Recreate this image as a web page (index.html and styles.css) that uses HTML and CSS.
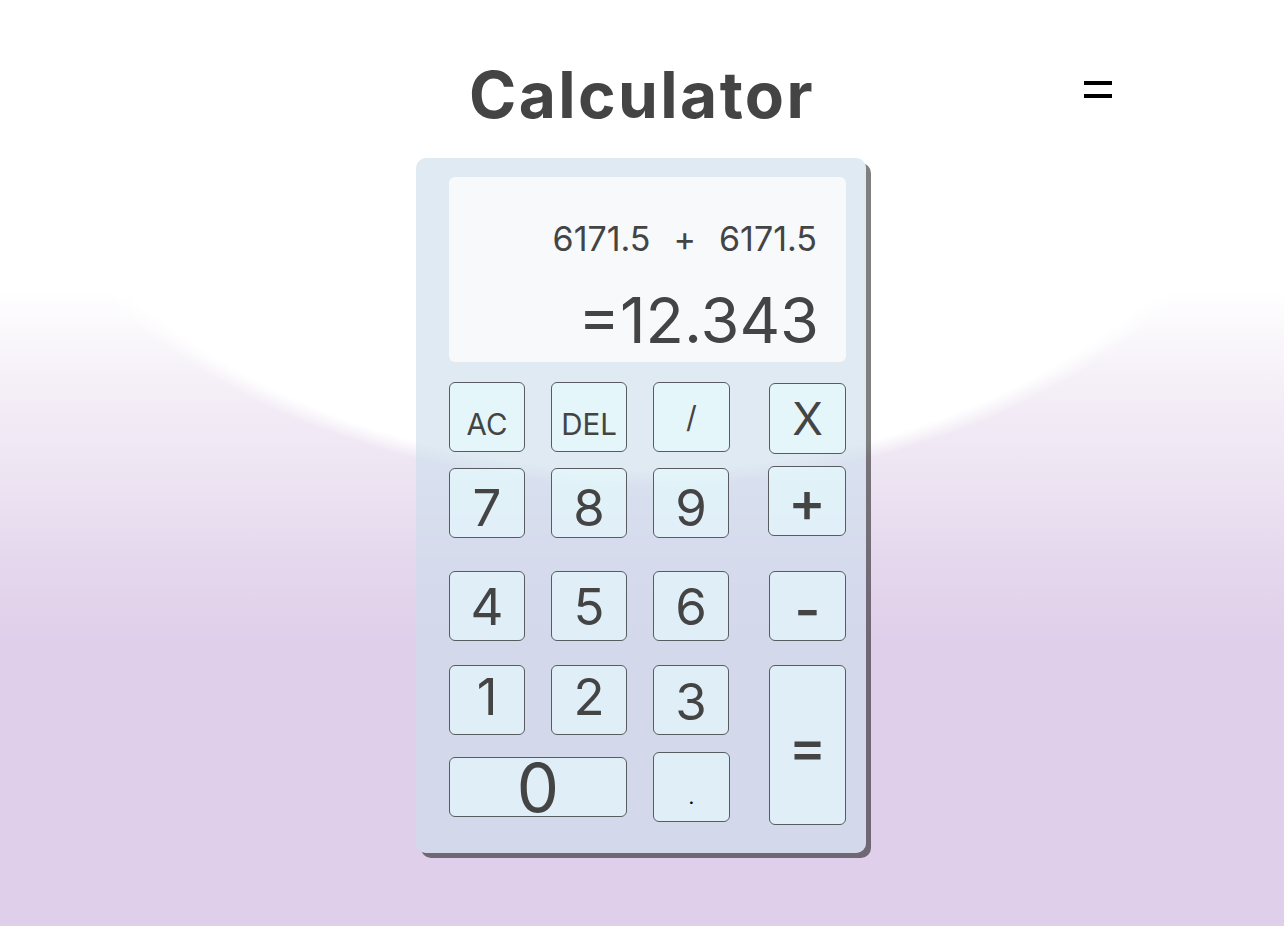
FILE: index.html
```html
<!DOCTYPE html>
<html lang="en">
<head>
<meta charset="utf-8">
<title>Calculator</title>
<link rel="stylesheet" href="styles.css">
</head>
<body>
<header class="topbar">
  <div class="topbar-side"></div>
  <h1 class="title">Calculator</h1>
  <div class="topbar-side topbar-right">
    <button class="menu" aria-label="Menu"><span class="menu-bar"></span><span class="menu-bar"></span></button>
  </div>
</header>
<main class="calc">
  <div class="display">
    <div class="expr"><span>6171.5</span><span class="expr-op">+</span><span>6171.5</span></div>
    <div class="result">=12.343</div>
  </div>
  <div class="keys">
    <button class="key key-word">AC</button>
    <button class="key key-word">DEL</button>
    <button class="key key-slash">/</button>
    <button class="key key-x">X</button>

    <button class="key key-num key-low">7</button>
    <button class="key key-num key-low">8</button>
    <button class="key key-num key-low">9</button>
    <button class="key key-op key-plus">+</button>

    <button class="key key-num">4</button>
    <button class="key key-num">5</button>
    <button class="key key-num">6</button>
    <button class="key key-op key-minus">-</button>

    <button class="key key-num key-high">1</button>
    <button class="key key-num key-high">2</button>
    <button class="key key-num key-three">3</button>
    <button class="key key-op key-equals">=</button>

    <button class="key key-zero">0</button>
    <button class="key key-dot">.</button>
  </div>
</main>
</body>
</html>
```

FILE: styles.css
```css
html, body {
  margin: 0;
  padding: 0;
}

body {
  min-height: 926px;
  font-family: "Inter", "Liberation Sans", sans-serif;
  color: #444;
  background:
    radial-gradient(ellipse 680px 487px at 50% 0, #fff 96.5%, rgba(255,255,255,0) 100%),
    linear-gradient(#fff 0, #fff 290px, #f4eef7 390px, #eee5f3 470px, #e5d8ed 560px, #e0cfea 640px, #e0cfea 100%);
  background-repeat: no-repeat;
}

.topbar {
  display: grid;
  grid-template-columns: 1fr auto 1fr;
  align-items: start;
  height: 158px;
  box-sizing: border-box;
  padding-top: 63px;
}

.title {
  margin: 0;
  font-family: "Inter", "Liberation Sans", sans-serif;
  font-weight: 700;
  font-size: 64px;
  line-height: 64px;
  letter-spacing: 2.4px;
  color: #444;
}

.topbar-right {
  display: flex;
  justify-content: flex-end;
  padding-right: 172px;
}

.menu {
  display: flex;
  flex-direction: column;
  gap: 9px;
  margin-top: 18px;
  padding: 0;
  border: 0;
  background: none;
}

.menu-bar {
  display: block;
  width: 28px;
  height: 4px;
  background: #000;
}

.calc {
  width: 450px;
  height: 695px;
  box-sizing: border-box;
  margin: 0 0 0 calc(50% - 226px);
  padding: 19px 20px 0 33px;
  border-radius: 10px;
  background: rgba(203, 221, 236, 0.62);
  box-shadow: 5px 5px 0 rgba(0, 0, 0, 0.5);
}

.display {
  height: 185px;
  box-sizing: border-box;
  padding: 42px 29px 0 0;
  border-radius: 6px;
  background: #f8f9fb;
  text-align: right;
}

.expr {
  display: flex;
  justify-content: flex-end;
  gap: 23px;
  font-size: 34px;
  line-height: 40px;
  color: #444;
}

.result {
  margin-top: 26px;
  margin-right: -2px;
  font-size: 63px;
  line-height: 70px;
  color: #444;
}

.keys {
  display: grid;
  grid-template-columns: 102px 102px 116px 77px;
  grid-template-rows: 86px 103px 94px 87px 70px;
  margin-top: 20px;
}

.key {
  width: 76px;
  height: 70px;
  padding: 0;
  box-sizing: border-box;
  border: 1px solid #585c61;
  border-radius: 6px;
  background: rgba(232, 254, 255, 0.6);
  font-family: "Inter", "Liberation Sans", sans-serif;
  color: #444;
  display: flex;
  align-items: center;
  justify-content: center;
  line-height: 1;
}

.key-word {
  font-size: 29.5px;
  padding-top: 15px;
}

.key-slash {
  width: 77px;
  font-size: 30px;
}

.key-x {
  width: 77px;
  height: 71px;
  margin-top: 1px;
  font-size: 45px;
}

.key-num {
  font-size: 51px;
}

.key-op {
  width: 77px;
  font-size: 57px;
  font-weight: 500;
}

.key-low {
  padding-top: 8px;
}

.key-high {
  padding-bottom: 8px;
}

.key-three {
  padding-top: 2px;
}

.key-plus {
  width: 78px;
  margin-top: -2px;
  margin-left: -1px;
}

.key-minus {
  padding-top: 6px;
}

.key-equals {
  grid-row: span 2;
  height: 160px;
  padding-top: 2px;
}

.key-zero {
  grid-column: span 2;
  width: 178px;
  height: 60px;
  margin-top: 5px;
  font-size: 67px;
}

.key-dot {
  width: 77px;
  font-size: 20px;
  color: #000;
  align-items: flex-end;
  padding-bottom: 14px;
}
```
